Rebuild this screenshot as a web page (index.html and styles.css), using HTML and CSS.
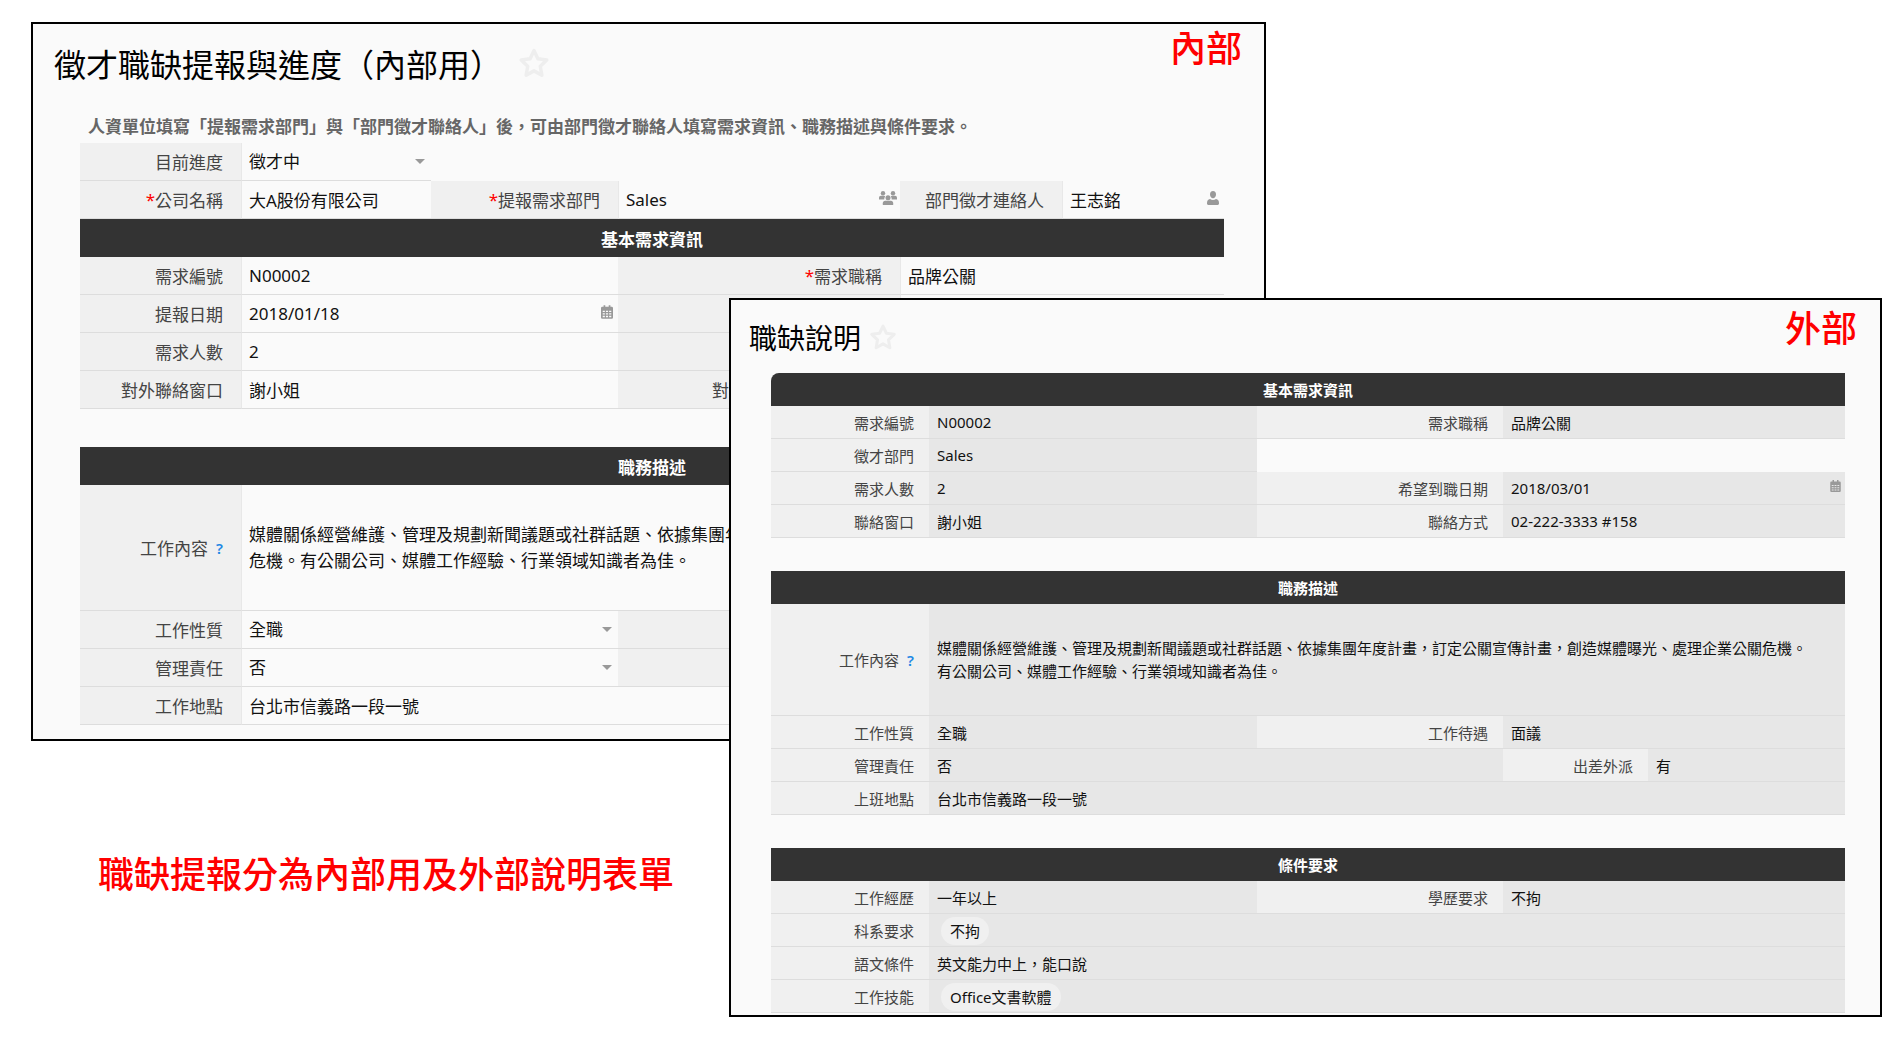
FILE: index.html
```html
<!DOCTYPE html>
<html lang="zh-Hant">
  <head>
    <meta charset="UTF-8" />
    <meta name="viewport" content="width=device-width, initial-scale=1.0" />
    <title>徵才職缺提報</title>
    <link rel="stylesheet" href="styles.css">
  </head>
  <body>
    <!-- Shared icons -->
    <svg class="sprite" aria-hidden="true">
      <symbol id="star" viewBox="0 0 24 24">
        <path d="M12 2.6l2.9 6.2 6.7.9-4.9 4.7 1.2 6.8-5.9-3.3-5.9 3.3 1.2-6.800-4.900-4.700 6.700-.9z" fill="none" stroke="currentColor" stroke-width="2.600" stroke-linejoin="round" />
      </symbol>
      <symbol id="calendar" viewBox="0 0 14 16">
        <path fill-rule="evenodd" d="M3 0h2v2h4V0h2v2h1.5A1.5 1.5 0 0 1 14 3.5V14.5a1.5 1.5 0 0 1-1.5 1.5h-11A1.5 1.5 0 0 1 0 14.5V3.5A1.5 1.5 0 0 1 1.5 2H3zM2 6.500v1.500h2.500V6.500zM5.750 6.500v1.500h2.500V6.500zM9.500 6.500v1.500H12V6.500zM2 9.500v1.500h2.500V9.500zM5.750 9.500v1.500h2.500V9.500zM9.500 9.500v1.500H12V9.500zM2 12.500v1.500h2.500v-1.500zM5.750 12.500v1.500h2.500v-1.500zM9.500 12.500v1.500H12v-1.500z" fill="currentColor" />
      </symbol>
      <symbol id="person" viewBox="0 0 12 14">
        <path d="M6 0a3 3.6 0 0 1 3 3.6C9 5.6 7.7 7.3 6 7.3S3 5.6 3 3.6A3 3.6 0 0 1 6 0zM3 8c1.8 1.3 4.2 1.3 6 0 2 .2 3 1.7 3 4v.6c0 .8-.5 1.4-1.3 1.4H1.3C.5 14 0 13.4 0 12.6V12c0-2.3 1-3.8 3-4z" fill="currentColor" />
      </symbol>
      <symbol id="people" viewBox="0 0 18 14">
        <g fill="currentColor">
          <circle cx="4" cy="2.2" r="2.2" />
          <circle cx="14" cy="2.2" r="2.2" />
          <path d="M0 8.5V7c0-1.3.8-2.2 2-2.2h3c.6 0 .9.2 1.2.6C5.4 6.3 5.2 7.3 5.3 8.5z" />
          <path d="M18 8.5V7c0-1.3-.8-2.2-2-2.2h-3c-.6 0-.9.2-1.2.6.8.9 1 1.9.9 3.1z" />
          <circle cx="9" cy="6.7" r="2.5" />
          <path d="M3.8 14v-1.8c0-1.5.9-2.5 2.4-2.5h5.6c1.5 0 2.4 1 2.4 2.5V14z" />
        </g>
      </symbol>
    </svg>

    <!-- Internal form -->
    <section class="panel internal">
      <header class="panel-header">
        <h1>徵才職缺提報與進度（內部用）</h1>
        <button class="star" type="button" aria-label="加入最愛"><svg><use href="#star" /></svg></button>
        <span class="tag">內部</span>
      </header>
      <form>
        <p class="note">人資單位填寫「提報需求部門」與「部門徵才聯絡人」後，可由部門徵才聯絡人填寫需求資訊、職務描述與條件要求。</p>
        <div class="grid">
          <label for="status">目前進度</label>
          <div class="field">
            <select id="status"><option>徵才中</option></select>
          </div>
          <div class="blank wide-4"></div>

          <label class="required" for="company">公司名稱</label>
          <div class="field"><input type="text" id="company" value="大A股份有限公司"></div>
          <label class="required" for="dept">提報需求部門</label>
          <div class="field">
            <input type="text" id="dept" value="Sales">
            <svg class="icon people"><use href="#people" /></svg>
          </div>
          <label for="contact">部門徵才連絡人</label>
          <div class="field">
            <input type="text" id="contact" value="王志銘">
            <svg class="icon person"><use href="#person" /></svg>
          </div>

          <h2>基本需求資訊</h2>

          <label for="reqNo">需求編號</label>
          <div class="field wide-2"><input type="text" id="reqNo" value="N00002"></div>
          <label class="required" for="jobTitle">需求職稱</label>
          <div class="field wide-2"><input type="text" id="jobTitle" value="品牌公關"></div>

          <label for="reqDate">提報日期</label>
          <div class="field wide-2">
            <input type="text" id="reqDate" value="2018/01/18">
            <svg class="icon calendar"><use href="#calendar" /></svg>
          </div>
          <div class="label"></div>
          <div class="field wide-2"></div>

          <label for="headcount">需求人數</label>
          <div class="field wide-2"><input type="text" id="headcount" value="2"></div>
          <div class="label"></div>
          <div class="field wide-2"></div>

          <label for="window">對外聯絡窗口</label>
          <div class="field wide-2"><input type="text" id="window" value="謝小姐"></div>
          <label for="phone">對外聯絡窗口聯絡方式</label>
          <div class="field wide-2"><input type="text" id="phone" value="02-222-3333 #158"></div>

          <div class="blank wide-6"></div>
          <h2>職務描述</h2>

          <label for="duties">工作內容<span class="help">?</span></label>
          <div class="field tall wide-5">
            <textarea id="duties" rows="2">媒體關係經營維護、管理及規劃新聞議題或社群話題、依據集團年度計畫，訂定公關宣傳計畫，創造媒體曝光、處理企業公關危機。有公關公司、媒體工作經驗、行業領域知識者為佳。</textarea>
          </div>

          <label for="jobType">工作性質</label>
          <div class="field wide-2">
            <select id="jobType"><option>全職</option></select>
          </div>
          <label for="salary">工作待遇</label>
          <div class="field wide-2"><input type="text" id="salary" value="面議"></div>

          <label for="manage">管理責任</label>
          <div class="field wide-2">
            <select id="manage"><option>否</option></select>
          </div>
          <label for="travel">出差外派</label>
          <div class="field wide-2"><input type="text" id="travel" value="有"></div>

          <label for="place">工作地點</label>
          <div class="field wide-5"><input type="text" id="place" value="台北市信義路一段一號"></div>
        </div>
      </form>
    </section>

    <!-- External form, read only -->
    <section class="panel external">
      <header class="panel-header">
        <h1>職缺說明</h1>
        <button class="star" type="button" aria-label="加入最愛"><svg><use href="#star" /></svg></button>
        <span class="tag">外部</span>
      </header>
      <form>
        <div class="grid">
          <h2>基本需求資訊</h2>

          <label for="exNo">需求編號</label>
          <div class="field"><input type="text" id="exNo" value="N00002" readonly></div>
          <label for="exTitle">需求職稱</label>
          <div class="field wide-2"><input type="text" id="exTitle" value="品牌公關" readonly></div>

          <label for="exDept">徵才部門</label>
          <div class="field"><input type="text" id="exDept" value="Sales" readonly></div>
          <div class="blank wide-3"></div>

          <label for="exCount">需求人數</label>
          <div class="field"><input type="text" id="exCount" value="2" readonly></div>
          <label for="exStart">希望到職日期</label>
          <div class="field wide-2">
            <input type="text" id="exStart" value="2018/03/01" readonly>
            <svg class="icon calendar"><use href="#calendar" /></svg>
          </div>

          <label for="exWindow">聯絡窗口</label>
          <div class="field"><input type="text" id="exWindow" value="謝小姐" readonly></div>
          <label for="exPhone">聯絡方式</label>
          <div class="field wide-2"><input type="text" id="exPhone" value="02-222-3333 #158" readonly></div>

          <div class="blank wide-5"></div>
          <h2>職務描述</h2>

          <label for="exDuties">工作內容<span class="help">?</span></label>
          <div class="field tall wide-4">
            <textarea id="exDuties" rows="2" readonly>媒體關係經營維護、管理及規劃新聞議題或社群話題、依據集團年度計畫，訂定公關宣傳計畫，創造媒體曝光、處理企業公關危機。
有公關公司、媒體工作經驗、行業領域知識者為佳。</textarea>
          </div>

          <label for="exType">工作性質</label>
          <div class="field"><input type="text" id="exType" value="全職" readonly></div>
          <label for="exSalary">工作待遇</label>
          <div class="field wide-2"><input type="text" id="exSalary" value="面議" readonly></div>

          <label for="exManage">管理責任</label>
          <div class="field wide-2"><input type="text" id="exManage" value="否" readonly></div>
          <label for="exTravel">出差外派</label>
          <div class="field"><input type="text" id="exTravel" value="有" readonly></div>

          <label for="exPlace">上班地點</label>
          <div class="field wide-4"><input type="text" id="exPlace" value="台北市信義路一段一號" readonly></div>

          <div class="blank wide-5"></div>
          <h2>條件要求</h2>

          <label for="exYears">工作經歷</label>
          <div class="field"><input type="text" id="exYears" value="一年以上" readonly></div>
          <label for="exDegree">學歷要求</label>
          <div class="field wide-2"><input type="text" id="exDegree" value="不拘" readonly></div>

          <div class="label">科系要求</div>
          <div class="field wide-4"><span class="pill">不拘</span></div>

          <label for="exLang">語文條件</label>
          <div class="field wide-4"><input type="text" id="exLang" value="英文能力中上，能口說" readonly></div>

          <div class="label">工作技能</div>
          <div class="field wide-4"><span class="pill">Office文書軟體</span></div>
        </div>
      </form>
    </section>

    <p class="caption">職缺提報分為內部用及外部說明表單</p>
  </body>
</html>
```

FILE: styles.css
```css
* {
  box-sizing: border-box;
}
body {
  margin: 0;
  min-height: 100vh;
  position: relative;
  background: #fff;
  color: #111;
  font-family: "Noto Sans", "Noto Sans CJK TC", sans-serif;
}
h1,
h2,
p {
  margin: 0;
}
.sprite {
  position: absolute;
  width: 0;
  height: 0;
}

/* The two forms overlap like windows */
.panel {
  position: absolute;
  background: #fafafa;
  border: 2px solid #000;
}
.internal {
  top: 22px;
  left: 31px;
  right: 631px;
  padding: 0 40px 14px 47px;
  font-size: 17px;
}
.external {
  top: 298px;
  left: 729px;
  right: 15px;
  padding: 0 35px 2px 40px;
  font-size: 15px;
}

.panel-header {
  display: flex;
  align-items: center;
  height: 78px;
}
.internal .panel-header {
  margin: 0 -18px 0 -26px;
}
.external .panel-header {
  height: 73px;
  margin: 0 -12px 0 -22px;
}
.panel-header h1 {
  font-size: 32px;
  font-weight: 400;
  color: #000;
}
.external h1 {
  font-size: 28px;
}
.star {
  padding: 0;
  border: none;
  background: none;
  color: #eee;
  cursor: pointer;
}
.star svg {
  display: block;
  width: 32px;
  height: 32px;
}
.internal .star {
  margin-left: 16px;
}
.external .star {
  margin-left: 8px;
}
.external .star svg {
  width: 28px;
  height: 28px;
}
.tag {
  margin-left: auto;
  align-self: flex-start;
}
.tag,
.caption {
  color: #f00;
  font-size: 36px;
  font-weight: 500;
  line-height: 50px;
}
.external .tag {
  line-height: 58px;
}
.caption {
  position: absolute;
  top: 850px;
  left: 98px;
}

.note {
  padding: 12px 8px 0;
  height: 41px;
  line-height: 26px;
  font-weight: 700;
  color: #666;
}

/* Form rows */
.grid {
  display: grid;
}
.internal .grid {
  grid-template-columns: 161fr 190fr 187fr 282fr 162fr 162fr;
  grid-auto-rows: minmax(38px, auto);
}
.external .grid {
  grid-template-columns: 158fr 328fr 246fr 145fr 197fr;
  grid-auto-rows: minmax(33px, auto);
}
.grid h2 {
  grid-column: 1 / -1;
  display: flex;
  align-items: center;
  justify-content: center;
  background: #333;
  color: #fff;
  font-size: inherit;
  font-weight: 700;
}
.external h2:first-child {
  border-top-left-radius: 8px;
}
label,
.label {
  display: flex;
  align-items: center;
  justify-content: flex-end;
  min-width: 0;
  padding-right: 18px;
  background: #f0f0f0;
  border-bottom: 1px solid #ddd;
  color: #444;
  white-space: nowrap;
}
.external label,
.external .label {
  padding-right: 15px;
}
.required::before {
  content: "*";
  color: #f00;
}
.help {
  margin-left: 8px;
  color: #1e88e5;
  font-size: 15px;
  font-weight: 600;
}
.field {
  display: flex;
  align-items: center;
  min-width: 0;
  padding: 0 8px;
  border-bottom: 1px solid #ddd;
}
.internal .field {
  padding-left: 7px;
  border-left: 1px solid #e8e8e8;
}
.external .field {
  background: #e7e7e7;
}
.wide-2 {
  grid-column: span 2;
}
.wide-3 {
  grid-column: span 3;
}
.wide-4 {
  grid-column: span 4;
}
.wide-5 {
  grid-column: span 5;
}
.wide-6 {
  grid-column: span 6;
}
.internal .tall {
  height: 126px;
}
.external .tall {
  height: 112px;
}

input,
select,
textarea {
  flex: 1;
  min-width: 0;
  padding: 0;
  border: none;
  outline: none;
  background: none;
  color: inherit;
  font: inherit;
}
textarea {
  resize: none;
  overflow: hidden;
  line-height: 26px;
}
.external textarea {
  line-height: 23px;
}
.internal textarea {
  padding-right: 22px;
}
select {
  appearance: none;
}
.field:has(select)::after {
  content: "";
  border: 5px solid transparent;
  border-top-color: #999;
  border-bottom: none;
  margin-right: -2px;
}
.icon {
  flex: none;
  color: #999;
}
.calendar {
  width: 12px;
  height: 14px;
  margin: 0 -3px 4px 0;
}
.external .calendar {
  width: 11px;
  height: 12px;
  margin-right: -4px;
}
.people {
  width: 18px;
  height: 14px;
  margin: 0 -5px 4px 0;
}
.person {
  width: 12px;
  height: 14px;
  margin: 0 -3px 4px 0;
}
.pill {
  margin: 2px 0 0 4px;
  padding: 0 9px;
  line-height: 28px;
  border-radius: 14px;
  background: #f0f0f0;
}
```
